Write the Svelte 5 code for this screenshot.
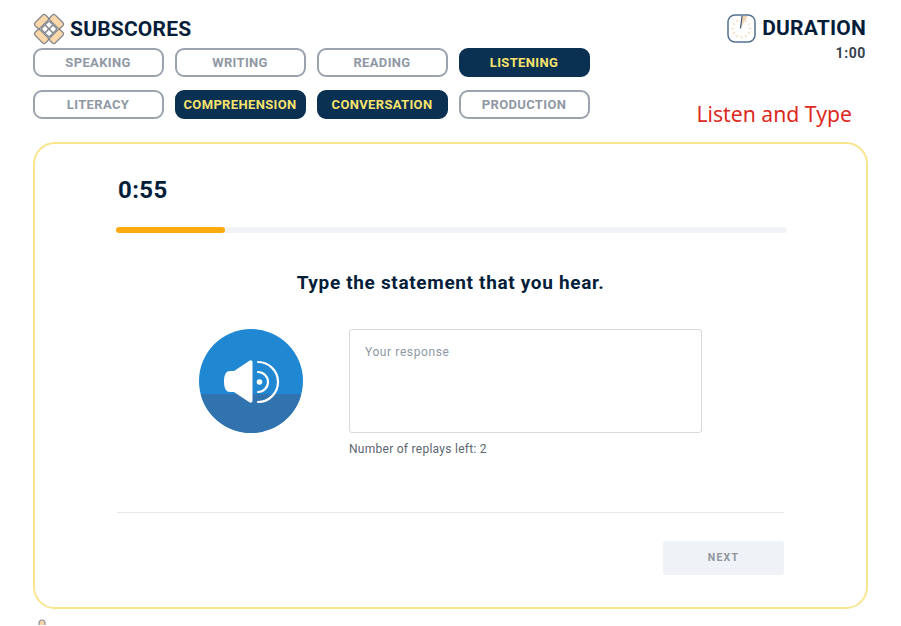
<script>
  const rows = [
    [{ t: 'SPEAKING' }, { t: 'WRITING' }, { t: 'READING' }, { t: 'LISTENING', on: true }],
    [{ t: 'LITERACY' }, { t: 'COMPREHENSION', on: true }, { t: 'CONVERSATION', on: true }, { t: 'PRODUCTION' }]
  ];
  const tabs = rows.flat();
  const ticks = [30, 60, 90, 120, 150, 180, 210, 240, 270, 300, 330];
  const cells = [[11, 11], [16, 11], [11, 16], [16, 16]];
</script>

<div class="page">
  <header class="head">
    <div class="left">
      <div class="brand">
        <svg class="logo" width="32" height="32" viewBox="2 2 28 28" aria-hidden="true">
          <g transform="rotate(45 16 16)" stroke="#85888c" stroke-width="1.100">
            <rect x="9.500" y="3.500" width="13" height="6.500" rx="2" fill="#fbd7a9" />
            <rect x="9.500" y="22" width="13" height="6.500" rx="2" fill="#fbd7a9" />
            <rect x="3.500" y="9.500" width="6.500" height="13" rx="2" fill="#fbd7a9" />
            <rect x="22" y="9.500" width="6.500" height="13" rx="2" fill="#fbd7a9" />
            {#each cells as c}
              <rect x={c[0]} y={c[1]} width="5" height="5" rx="1" fill="#fff" />
            {/each}
          </g>
        </svg>
        <h1>SUBSCORES</h1>
      </div>
      <div class="tabs">
        {#each tabs as tab}
          <div class="tab" class:on={tab.on}>{tab.t}</div>
        {/each}
      </div>
    </div>
    <div class="right">
      <div class="dur">
        <svg width="29" height="29" viewBox="0 0 29 29" aria-hidden="true">
          <rect x="1" y="1" width="27" height="27" rx="7" fill="#fff" stroke="#53708f" stroke-width="1.500" />
          <path d="M13.500 14.500 15 2h5.500z" fill="#efd3b3" />
          <path d="M13.500 14.500 15 2" stroke="#3f5c7c" stroke-width="1.200" />
          {#each ticks as a}
            <path d="M14.500 4.500v2.400" stroke="#f6d8b4" stroke-width="1.100" transform="rotate({a} 14.500 14.500)" />
          {/each}
        </svg>
        <span>DURATION</span>
      </div>
      <div class="time">1:00</div>
      <div class="note">Listen and Type</div>
    </div>
  </header>

  <main class="card">
    <div class="clock">0:55</div>
    <div class="track"><div class="fill" style="width: 16.2%"></div></div>
    <h2>Type the statement that you hear.</h2>
    <div class="task">
      <div class="play">
        <svg width="104" height="104" viewBox="0 0 104 104" aria-hidden="true">
          <defs><clipPath id="c"><circle cx="52" cy="52" r="52" /></clipPath></defs>
          <g clip-path="url(#c)">
            <rect width="104" height="104" fill="#2087d2" />
            <rect y="65" width="104" height="39" fill="#3173ae" />
          </g>
          <path d="M35 42 50 32c2-1.300 3.500-.6 3.500 1.500v38c0 2.100-1.500 2.800-3.500 1.500L35 63h-4c-3.500 0-6-3-6-10.500S27.500 42 31 42z" fill="#fff" />
          <path d="M59 33a20 20 0 0 1 0 40M59 43a10 10 0 0 1 0 20" fill="none" stroke="#fff" stroke-width="2.200" stroke-linecap="round" />
          <circle cx="60.500" cy="53" r="2.800" fill="#fff" />
        </svg>
      </div>
      <div class="answer">
        <div class="box">Your response</div>
        <div class="left-count">Number of replays left: 2</div>
      </div>
    </div>
    <div class="rule"></div>
    <div class="foot"><div class="next">NEXT</div></div>
  </main>

  <svg class="stub" width="10" height="6" viewBox="0 0 10 6" aria-hidden="true">
    <path d="M2 6V4a3 3 0 0 1 6 0v2" fill="#f8d4a6" stroke="#8a8f9a" stroke-width="1.200" />
  </svg>
</div>

<style>
  :global(body) {
    margin: 0;
    background: #fff;
  }
  .page {
    width: 901px;
    height: 626px;
    overflow: hidden;
    padding: 14px 33px 0;
    box-sizing: border-box;
    font-family: Roboto, "Liberation Sans", sans-serif;
    color: #041e3a;
  }
  .head {
    display: flex;
    justify-content: space-between;
    height: 128px;
  }
  .brand {
    display: flex;
    align-items: center;
    gap: 5px;
    height: 30px;
    margin-bottom: 4px;
  }
  h1 {
    margin: 0;
    font-size: 21px;
    font-weight: 700;
    letter-spacing: 0.2px;
    line-height: 30px;
    color: #041e3a;
  }
  .tabs {
    display: grid;
    grid-template-columns: repeat(4, 131px);
    grid-auto-rows: 29px;
    column-gap: 11px;
    row-gap: 13px;
  }
  .tab {
    box-sizing: border-box;
    border: 2px solid #9aa3ae;
    border-radius: 9px;
    display: flex;
    align-items: center;
    justify-content: center;
    font-size: 13px;
    font-weight: 700;
    letter-spacing: 0.35px;
    color: #8f98a4;
    background: #fff;
    padding-right: 1px;
  }
  .tab.on {
    background: #0a3052;
    border-color: #0a3052;
    color: #f7e26e;
  }
  .right {
    display: flex;
    flex-direction: column;
    align-items: flex-end;
  }
  .dur {
    display: flex;
    align-items: center;
    gap: 6px;
    font-size: 21px;
    font-weight: 700;
    letter-spacing: 0.2px;
    height: 29px;
    line-height: 29px;
    margin-right: 2px;
  }
  .time {
    font-size: 14px;
    font-weight: 700;
    letter-spacing: 0.6px;
    color: #37424e;
    margin-right: 2px;
    line-height: 17px;
    margin-top: 2px;
  }
  .note {
    font-family: "Noto Sans", "Open Sans", sans-serif;
    font-size: 21.200px;
    line-height: 30px;
    color: #dc2a22;
    margin-top: 37px;
    margin-right: 16px;
  }
  .card {
    width: 835px;
    height: 467px;
    box-sizing: border-box;
    border: 2px solid #f8e58e;
    border-radius: 22px;
    padding: 31px 81px 0;
    background: #fff;
  }
  .clock {
    font-size: 24px;
    font-weight: 700;
    letter-spacing: 0.4px;
    line-height: 30px;
    padding-left: 2px;
    color: #041e3a;
  }
  .track {
    width: 671px;
    height: 6px;
    border-radius: 3px;
    background: #f1f3f6;
    margin-top: 22px;
  }
  .fill {
    height: 100%;
    border-radius: 3px;
    background: #fdab10;
  }
  h2 {
    margin: 38px 0 0;
    font-size: 19px;
    font-weight: 700;
    letter-spacing: 0.66px;
    line-height: 24px;
    text-align: center;
    width: 669px;
    color: #041e3a;
  }
  .task {
    display: flex;
    margin-top: 34px;
    padding-left: 83px;
    height: 172px;
  }
  .play {
    width: 104px;
    height: 104px;
    margin-right: 46px;
  }
  .play svg {
    display: block;
  }
  .box {
    box-sizing: border-box;
    width: 353px;
    height: 104px;
    border: 1px solid #d6d9dc;
    border-radius: 3px;
    padding: 14px 15px;
    font-size: 12px;
    letter-spacing: 0.6px;
    line-height: 16px;
    color: #8f98a4;
  }
  .left-count {
    font-size: 12px;
    letter-spacing: 0.27px;
    line-height: 16px;
    margin-top: 8px;
    color: #5c6670;
  }
  .rule {
    width: 667px;
    height: 1px;
    margin-left: 1px;
    background: #e8e9eb;
    margin-top: 11px;
  }
  .foot {
    display: flex;
    justify-content: flex-end;
    width: 668px;
    margin-top: 28px;
  }
  .next {
    width: 121px;
    height: 34px;
    border-radius: 3px;
    background: #eff2f6;
    display: flex;
    align-items: center;
    justify-content: center;
    font-size: 10.500px;
    font-weight: 700;
    letter-spacing: 1.200px;
    color: #8f96a0;
    padding-bottom: 1px;
    box-sizing: border-box;
  }
  .stub {
    display: block;
    margin: 10px 0 0 4px;
  }
</style>
